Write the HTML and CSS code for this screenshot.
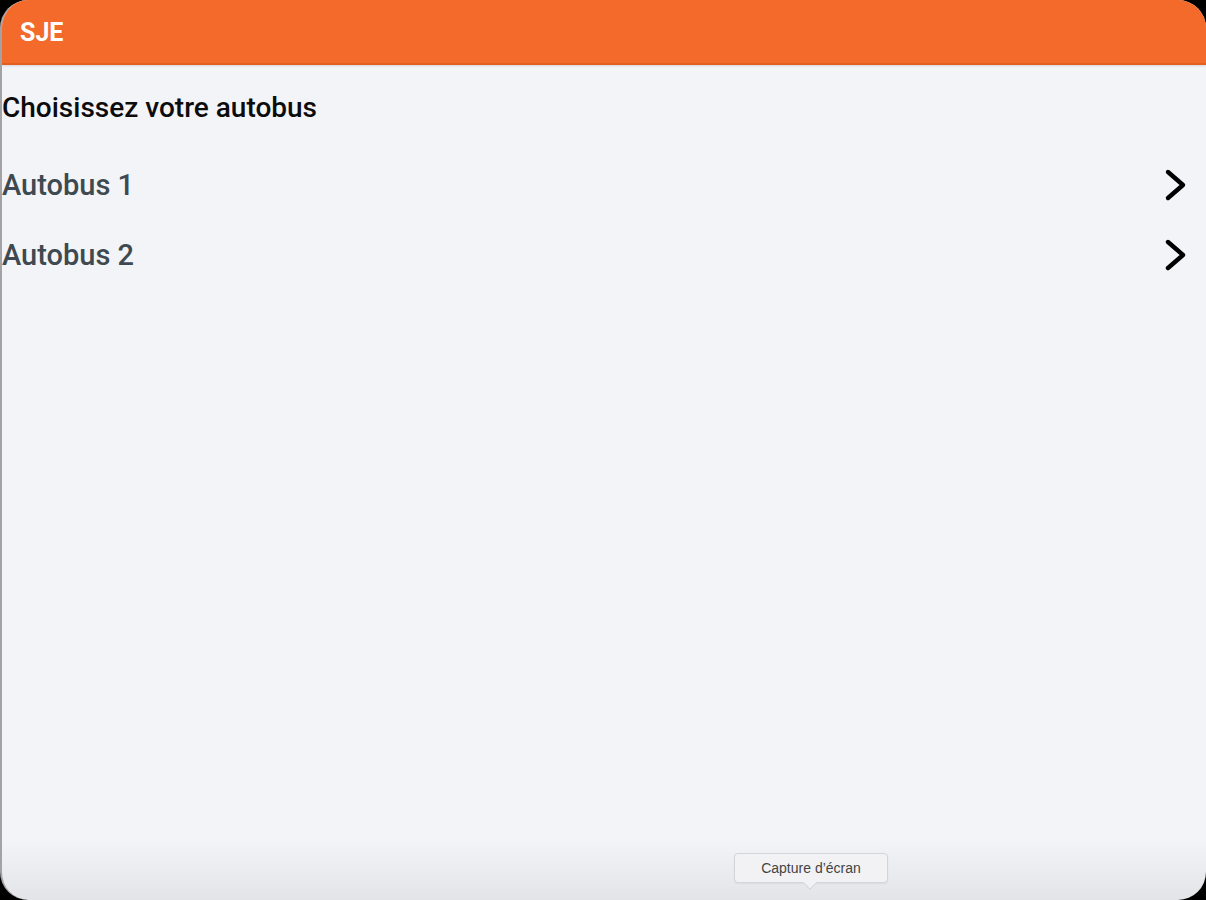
FILE: index.html
```html
<!DOCTYPE html>
<html lang="fr">
<head>
<meta charset="utf-8">
<title>SJE</title>
<link rel="stylesheet" href="styles.css">
</head>
<body>
<div class="screen">
  <header class="appbar"><span class="brand">SJE</span></header>
  <main class="content">
    <h1 class="title">Choisissez votre autobus</h1>
    <ul class="list">
      <li class="item"><span class="label">Autobus 1</span>
        <svg class="chev" width="26" height="34" viewBox="0 0 26 34"><path d="M5 4 L20 17 L5 30" fill="none" stroke="#000" stroke-width="4.4" stroke-linecap="round" stroke-linejoin="round"/></svg>
      </li>
      <li class="item"><span class="label">Autobus 2</span>
        <svg class="chev" width="26" height="34" viewBox="0 0 26 34"><path d="M5 4 L20 17 L5 30" fill="none" stroke="#000" stroke-width="4.4" stroke-linecap="round" stroke-linejoin="round"/></svg>
      </li>
    </ul>
  </main>
  <div class="tooltip">Capture d’écran</div>
</div>
</body>
</html>
```

FILE: styles.css
```css
html, body {
  margin: 0;
  padding: 0;
  background: #000;
  width: 1206px;
  height: 900px;
  overflow: hidden;
}
.screen {
  position: relative;
  box-sizing: border-box;
  width: 1206px;
  height: 900px;
  background: linear-gradient(to bottom, #f3f4f8 0, #f3f4f8 840px, #e3e4e8 900px);
  border-left: 2px solid #a3a3a6;
  border-radius: 28px;
  overflow: hidden;
  display: flex;
  flex-direction: column;
  font-family: Roboto, "Liberation Sans", sans-serif;
}
.appbar {
  height: 63px;
  background: #f36a2a;
  border-bottom: 2px solid #e35f1f;
  box-shadow: 0 1px 2px rgba(0,0,0,0.12);
  display: flex;
  align-items: center;
  padding-left: 18px;
  flex-shrink: 0;
}
.brand {
  color: #fff;
  font-weight: 700;
  font-size: 25px;
  margin-top: 1px;
}
.content {
  padding: 0 17px 0 0;
}
.title {
  margin: 26px 0 0 0;
  font-size: 28px;
  font-weight: 500;
  color: #0c0c0c;
  line-height: 34px;
}
.list {
  list-style: none;
  margin: 25px 0 0 0;
  padding: 0;
}
.item {
  display: flex;
  align-items: center;
  justify-content: space-between;
  height: 70px;
}
.label {
  font-size: 29px;
  color: #3e4a50;
  font-weight: 500;
}
.chev {
  display: block;
}
.tooltip {
  position: absolute;
  left: 732px;
  top: 853px;
  width: 154px;
  height: 30px;
  box-sizing: border-box;
  border: 1px solid #d4d5d9;
  border-radius: 4px;
  background: #f2f2f4;
  font-family: "Liberation Sans", Arial, sans-serif;
  font-size: 14px;
  color: #444;
  display: flex;
  align-items: center;
  justify-content: center;
  box-shadow: 0 1px 2px rgba(0,0,0,0.06);
}
.tooltip::after {
  content: "";
  position: absolute;
  left: 70px;
  bottom: -6px;
  width: 9px;
  height: 9px;
  background: #f2f2f4;
  border-right: 1px solid #d4d5d9;
  border-bottom: 1px solid #d4d5d9;
  transform: rotate(45deg);
}
```
